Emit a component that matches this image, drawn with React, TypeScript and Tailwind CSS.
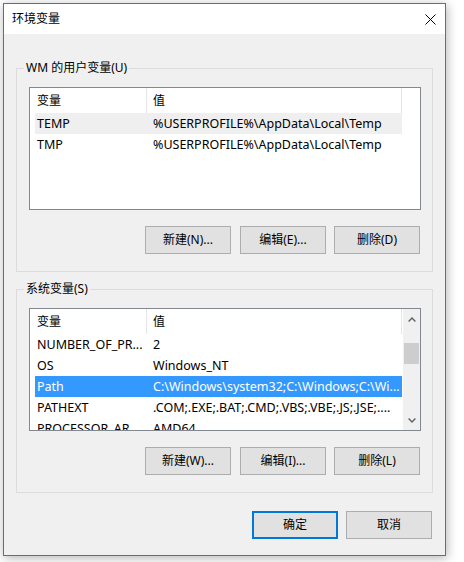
import React from "react";

type Row = { name: string; value: string };

const userVars: Row[] = [
  { name: "TEMP", value: "%USERPROFILE%\\AppData\\Local\\Temp" },
  { name: "TMP", value: "%USERPROFILE%\\AppData\\Local\\Temp" },
];

const systemVars: Row[] = [
  { name: "NUMBER_OF_PR...", value: "2" },
  { name: "OS", value: "Windows_NT" },
  { name: "Path", value: "C:\\Windows\\system32;C:\\Windows;C:\\Wi..." },
  { name: "PATHEXT", value: ".COM;.EXE;.BAT;.CMD;.VBS;.VBE;.JS;.JSE;...." },
  { name: "PROCESSOR_AR...", value: "AMD64" },
];

function CloseIcon() {
  return (
    <svg width="11" height="11" viewBox="0 0 11 11" className="block">
      <path d="M0.5 0.5 L10.5 10.5 M10.5 0.5 L0.5 10.5" stroke="#000" strokeWidth="1" fill="none" />
    </svg>
  );
}

function Chevron({ up }: { up: boolean }) {
  return (
    <svg width="8" height="5" viewBox="0 0 8 5" className="block">
      <polyline
        points={up ? "0.6,4.4 4,1 7.4,4.4" : "0.6,0.6 4,4 7.4,0.6"}
        stroke="#606060"
        strokeWidth="1.4"
        fill="none"
      />
    </svg>
  );
}

function ListHeader() {
  return (
    <div className="flex h-[25px] w-[372px] shrink-0">
      <div className="flex w-[117px] items-center border-r border-[#e5e5e5] pl-[7px]">变量</div>
      <div className="flex w-[255px] items-center border-r border-[#e5e5e5] pl-[6px]">值</div>
    </div>
  );
}

function ListRow({ row, state }: { row: Row; state: "none" | "hover" | "selected" }) {
  const tone =
    state === "selected"
      ? "bg-[#3399ff] text-white"
      : state === "hover"
        ? "bg-[#efefef] text-black"
        : "text-black";
  return (
    <div className={`ml-[5px] flex h-[21px] w-[367px] shrink-0 items-center text-[12.5px] ${tone}`}>
      <div className="w-[111px] shrink-0 overflow-hidden whitespace-nowrap pl-[2px]">{row.name}</div>
      <div className="flex-1 overflow-hidden whitespace-nowrap pl-[7px]">{row.value}</div>
    </div>
  );
}

function ScrollBar() {
  return (
    <div className="ml-[1px] flex w-[17px] flex-col bg-[#f0f0f0]">
      <div className="flex h-[20px] items-center justify-center">
        <Chevron up />
      </div>
      <div className="flex-1">
        <div className="ml-[1px] mt-[14px] h-[21px] w-[15px] bg-[#cdcdcd]" />
      </div>
      <div className="flex h-[20px] items-center justify-center">
        <Chevron up={false} />
      </div>
    </div>
  );
}

function ListView({
  rows,
  hover,
  selected,
  scroll,
}: {
  rows: Row[];
  hover?: number;
  selected?: number;
  scroll?: boolean;
}) {
  return (
    <div className="flex h-[123px] w-[392px] border border-[#828790] bg-white">
      <div className="flex w-[372px] flex-col overflow-hidden">
        <ListHeader />
        {rows.map((r, i) => (
          <ListRow
            key={r.name}
            row={r}
            state={i === selected ? "selected" : i === hover ? "hover" : "none"}
          />
        ))}
      </div>
      {scroll && <ScrollBar />}
    </div>
  );
}

function Button({ children, primary }: { children: React.ReactNode; primary?: boolean }) {
  return (
    <button
      className={`flex h-[28px] w-[86px] shrink-0 items-center justify-center bg-[#e1e1e1] text-[12px] text-black ${
        primary ? "border-2 border-[#0078d7]" : "border border-[#adadad]"
      }`}
    >
      {children}
    </button>
  );
}

function GroupBox({ label, children }: { label: string; children: React.ReactNode }) {
  return (
    <div className="relative h-[204px] w-[417px] border border-[#dcdcdc] pl-[12px] pt-[18px]">
      <span className="absolute -top-[9px] left-[7px] bg-[#f0f0f0] px-[2px] leading-[16px]">{label}</span>
      {children}
    </div>
  );
}

export default function App() {
  return (
    <div className="h-[562px] w-[464px] overflow-hidden bg-white pl-[3px] pt-[3px] font-[family-name:'Noto_Sans','Noto_Sans_CJK_SC',sans-serif] text-[12px] leading-[16px] text-black">
      <div className="flex h-[553px] w-[443px] flex-col border border-[#1883d7] shadow-[1px_2px_10px_rgba(0,0,0,0.3)]">
        <div className="flex h-[30px] shrink-0 items-center justify-between bg-white pl-[8px] pr-[9px]">
          <span>环境变量</span>
          <CloseIcon />
        </div>
        <div className="flex flex-1 flex-col bg-[#f0f0f0] pl-[12px] pt-[34px]">
          <GroupBox label="WM 的用户变量(U)">
            <ListView rows={userVars} hover={0} />
            <div className="mt-[16px] flex pl-[116px]">
              <Button>新建(N)...</Button>
              <div className="ml-[9px]">
                <Button>编辑(E)...</Button>
              </div>
              <div className="ml-[8px]">
                <Button>删除(D)</Button>
              </div>
            </div>
          </GroupBox>
          <div className="mt-[17px]">
            <GroupBox label="系统变量(S)">
              <ListView rows={systemVars} selected={2} scroll />
              <div className="mt-[16px] flex pl-[116px]">
                <Button>新建(W)...</Button>
                <div className="ml-[9px]">
                  <Button>编辑(I)...</Button>
                </div>
                <div className="ml-[8px]">
                  <Button>删除(L)</Button>
                </div>
              </div>
            </GroupBox>
          </div>
          <div className="mt-[18px] flex pl-[236px]">
            <Button primary>确定</Button>
            <div className="ml-[8px]">
              <Button>取消</Button>
            </div>
          </div>
        </div>
      </div>
    </div>
  );
}
